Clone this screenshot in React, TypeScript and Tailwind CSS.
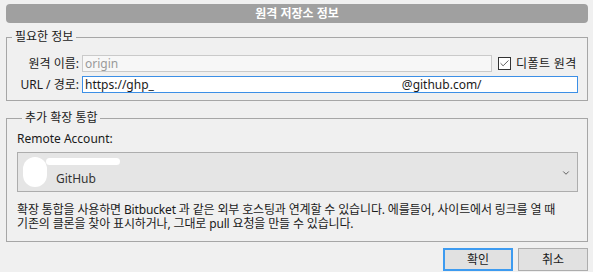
import { Check, ChevronDown } from 'lucide-react';

const font = "font-['Noto_Sans','Noto_Sans_CJK_KR',sans-serif]";

function GroupBox({ title, className = '', children }: { title: string; className?: string; children: React.ReactNode }) {
  return (
    <fieldset className={`border border-[#a6a6a6] ${className}`}>
      <legend className="ml-[5px] px-[3px] text-[12px] leading-[16px] text-[#1a1a1a]">{title}</legend>
      {children}
    </fieldset>
  );
}

export default function App() {
  return (
    <div className={`w-[593px] h-[272px] bg-[#f0f0f0] pt-[4px] pl-[6px] pr-[5px] ${font} text-[12px] text-[#1a1a1a]`}>
      {/* title */}
      <div className="h-[19px] rounded-[4px] bg-[#a0a0a0] flex items-center justify-center text-white font-bold text-[12px] leading-[19px]">
        원격 저장소 정보
      </div>

      <GroupBox title="필요한 정보" className="mt-[6px] pt-[10px] pb-[7px] pr-[9px]">
        <div className="flex items-center h-[17px]">
          <span className="w-[72px] text-right leading-[17px]">원격 이름:</span>
          <div className="ml-[3px] w-[410px] h-[17px] border border-[#cacaca] bg-[#f7f7f7] px-[2px] text-[#9a9a9a] leading-[15px]">
            origin
          </div>
          <div className="ml-[6px] w-[13px] h-[13px] border border-[#333] bg-white flex items-center justify-center">
            <Check size={11} strokeWidth={1.6} className="text-[#222]" />
          </div>
          <span className="ml-[5px] leading-[17px] tracking-[0.4px]">디폴트 원격</span>
        </div>
        <div className="flex items-center h-[17px] mt-[4px]">
          <span className="w-[72px] text-right leading-[17px]">URL / 경로:</span>
          <div className="ml-[3px] flex-1 h-[17px] border border-[#3c8fe6] bg-white px-[2px] leading-[15px] whitespace-nowrap overflow-hidden">
            <span>https://ghp_</span>
            <span className="inline-block w-[248px]" />
            <span>@github.com/</span>
          </div>
        </div>
      </GroupBox>

      <GroupBox title="추가 확장 통합" className="mt-[9px] pt-[5px] pb-[10px] pl-[10px] pr-[9px]">
        <div className="leading-[16px]">Remote Account:</div>
        <div className="mt-[5px] h-[40px] border border-[#adadad] bg-[#e5e5e5] flex items-center relative">
          <div className="ml-[5px] w-[24px] h-[30px] rounded-[12px] bg-white" />
          <div className="ml-[9px] flex flex-col">
            <div className="h-[7px] w-[74px] -ml-[10px] rounded-full bg-white" />
            <span className="mt-[6px] text-[#333] leading-[16px]">GitHub</span>
          </div>
          <ChevronDown size={10} strokeWidth={2} className="absolute right-[6px] top-[15px] text-[#444]" />
        </div>
        <p className="mt-[11px] text-[12px] leading-[14px] tracking-[-0.15px] whitespace-nowrap">
          확장 통합을 사용하면 Bitbucket 과 같은 외부 호스팅과 연계할 수 있습니다. 에를들어, 사이트에서 링크를 열 때
          <br />
          기존의 클론을 찾아 표시하거나, 그대로 pull 요청을 만들 수 있습니다.
        </p>
      </GroupBox>

      <div className="mt-[6px] flex justify-end gap-[5px]">
        <button className="w-[70px] h-[23px] border-2 border-[#3d9bf0] bg-[#e1e1e1] text-[12px] leading-[19px]">확인</button>
        <button className="w-[70px] h-[23px] border border-[#adadad] bg-[#e1e1e1] text-[12px] leading-[21px]">취소</button>
      </div>
    </div>
  );
}
